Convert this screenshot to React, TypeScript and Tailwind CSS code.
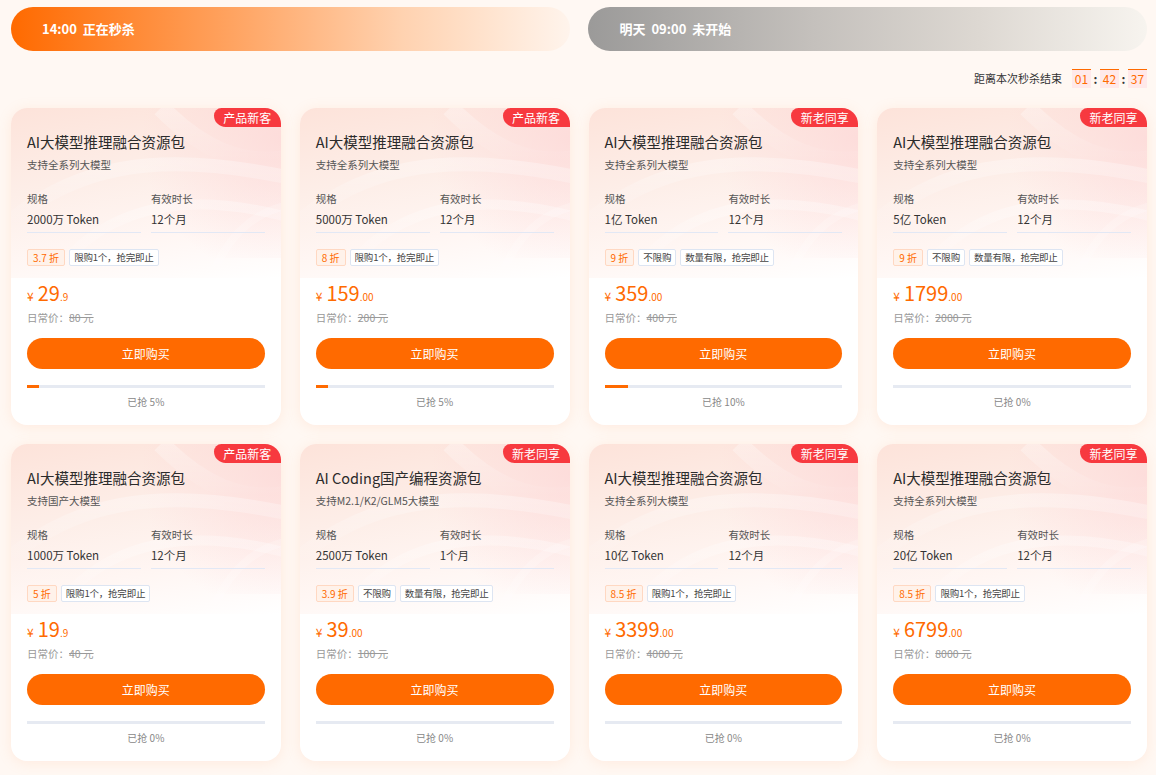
import React from "react";

type Deal = {
  badge: string;
  title: string;
  sub: string;
  spec: string;
  period: string;
  discount: string;
  tags: string[];
  price: string;
  cents: string;
  orig: string;
  pct: number;
};

const deals: Deal[] = [
  { badge: "产品新客", title: "AI大模型推理融合资源包", sub: "支持全系列大模型", spec: "2000万 Token", period: "12个月", discount: "3.7 折", tags: ["限购1个，抢完即止"], price: "29", cents: ".9", orig: "80 元", pct: 5 },
  { badge: "产品新客", title: "AI大模型推理融合资源包", sub: "支持全系列大模型", spec: "5000万 Token", period: "12个月", discount: "8 折", tags: ["限购1个，抢完即止"], price: "159", cents: ".00", orig: "200 元", pct: 5 },
  { badge: "新老同享", title: "AI大模型推理融合资源包", sub: "支持全系列大模型", spec: "1亿 Token", period: "12个月", discount: "9 折", tags: ["不限购", "数量有限，抢完即止"], price: "359", cents: ".00", orig: "400 元", pct: 10 },
  { badge: "新老同享", title: "AI大模型推理融合资源包", sub: "支持全系列大模型", spec: "5亿 Token", period: "12个月", discount: "9 折", tags: ["不限购", "数量有限，抢完即止"], price: "1799", cents: ".00", orig: "2000 元", pct: 0 },
  { badge: "产品新客", title: "AI大模型推理融合资源包", sub: "支持国产大模型", spec: "1000万 Token", period: "12个月", discount: "5 折", tags: ["限购1个，抢完即止"], price: "19", cents: ".9", orig: "40 元", pct: 0 },
  { badge: "新老同享", title: "AI Coding国产编程资源包", sub: "支持M2.1/K2/GLM5大模型", spec: "2500万 Token", period: "1个月", discount: "3.9 折", tags: ["不限购", "数量有限，抢完即止"], price: "39", cents: ".00", orig: "100 元", pct: 0 },
  { badge: "新老同享", title: "AI大模型推理融合资源包", sub: "支持全系列大模型", spec: "10亿 Token", period: "12个月", discount: "8.5 折", tags: ["限购1个，抢完即止"], price: "3399", cents: ".00", orig: "4000 元", pct: 0 },
  { badge: "新老同享", title: "AI大模型推理融合资源包", sub: "支持全系列大模型", spec: "20亿 Token", period: "12个月", discount: "8.5 折", tags: ["限购1个，抢完即止"], price: "6799", cents: ".00", orig: "8000 元", pct: 0 },
];

// soft light ribbons across the card header
function Swirl() {
  return (
    <svg
      className="pointer-events-none absolute left-0 top-0 h-[170px] w-full"
      viewBox="0 0 270 170"
      preserveAspectRatio="none"
    >
      <defs>
        <linearGradient id="swirlFade" x1="0" y1="0" x2="0" y2="1">
          <stop offset="0" stopColor="#ffffff" stopOpacity="0.3" />
          <stop offset="1" stopColor="#ffffff" stopOpacity="0" />
        </linearGradient>
      </defs>
      <path d="M-10 120 C 60 60, 140 40, 280 70" fill="none" stroke="url(#swirlFade)" strokeWidth="14" />
      <path d="M40 170 C 90 100, 170 80, 280 110" fill="none" stroke="url(#swirlFade)" strokeWidth="10" />
      <path d="M150 0 C 190 40, 230 60, 280 50" fill="none" stroke="url(#swirlFade)" strokeWidth="18" />
      <path d="M200 170 C 220 120, 250 100, 290 95" fill="none" stroke="#ffffff" strokeOpacity="0.2" strokeWidth="8" />
    </svg>
  );
}

function Card({ d }: { d: Deal }) {
  return (
    <div className="relative h-[317px] overflow-hidden rounded-[16px] bg-white shadow-[0_2px_14px_rgba(255,170,120,0.16)]">
      <div className="absolute inset-x-0 top-0 h-[170px] bg-[linear-gradient(170deg,#fde3da_0%,#fdeee8_40%,#fff6f3_70%,#ffffff_100%)]" />
      <div className="absolute right-0 top-0 h-[150px] w-[160px] bg-[radial-gradient(circle_at_100%_20%,rgba(253,214,214,0.7),rgba(255,255,255,0)_70%)]" />
      <Swirl />
      <div className="absolute right-0 top-0 flex h-[19px] w-[67px] items-center justify-center rounded-bl-[14px] rounded-tl-[9px] rounded-tr-[16px] bg-[#f7393f] text-[12px] leading-none text-white">
        {d.badge}
      </div>

      <div className="relative flex flex-col px-[16px] pt-[24px]">
        <div className="h-[20px] text-[14.5px] leading-[20px] text-[#2b2b2b]">{d.title}</div>
        <div className="mt-[6px] h-[14px] text-[10.5px] leading-[14px] text-[#555]">{d.sub}</div>

        <div className="mt-[20px] grid grid-cols-2 gap-[10px]">
          {[
            ["规格", d.spec],
            ["有效时长", d.period],
          ].map(([k, v]) => (
            <div key={k} className="border-b border-[#e2e8f5]">
              <div className="h-[14px] text-[10.5px] leading-[14px] text-[#555]">{k}</div>
              <div className="mt-[3px] h-[20px] text-[11.5px] leading-[20px] text-[#333]">{v}</div>
              <div className="h-[3px]" />
            </div>
          ))}
        </div>

        <div className="mt-[16px] flex h-[17px] gap-[4px]">
          <span className="flex items-center rounded-[2px] border border-[#ffd8c2] bg-[#fff2ea] px-[5px] text-[10px] leading-none text-[#ff6a00]">
            {d.discount}
          </span>
          {d.tags.map((t) => (
            <span
              key={t}
              className="flex items-center rounded-[2px] border border-[#dde5f2] bg-white px-[4px] text-[9.5px] leading-none tracking-[-0.2px] text-[#444]"
            >
              {t}
            </span>
          ))}
        </div>

        <div className="mt-[16px] flex h-[22px] items-baseline text-[#ff6a00]">
          <span className="mr-[4px] text-[12px]">¥</span>
          <span className="text-[20px] leading-[22px]">{d.price}</span>
          <span className="text-[10px]">{d.cents}</span>
        </div>

        <div className="mt-[7px] h-[14px] text-[10.5px] leading-[14px] text-[#999]">
          日常价：<span className="line-through">{d.orig}</span>
        </div>

        <button className="mt-[13px] h-[31px] w-full rounded-full bg-[#ff6a00] text-[12px] text-white">
          立即购买
        </button>

        <div className="mt-[16px] h-[3px] w-full bg-[#e6eaf2]">
          <div className="h-full bg-[#ff6a00]" style={{ width: `${d.pct}%` }} />
        </div>

        <div className="mt-[8px] h-[12px] text-center text-[10px] leading-[12px] text-[#888]">
          已抢 {d.pct}%
        </div>
      </div>
    </div>
  );
}

function TimeBox({ v }: { v: string }) {
  return (
    <span className="flex h-[19px] w-[19px] items-center justify-center border-t border-[#ff6a00] bg-[#ffe9ea] text-[12px] leading-none text-[#ff6a00]">
      {v}
    </span>
  );
}

export default function App() {
  return (
    <div
      className="min-h-[775px] w-[1156px] bg-[#fff8f3] pl-[11px] pr-[9px] pt-[7px]"
      style={{ fontFamily: '"Noto Sans CJK SC", "Noto Sans", sans-serif' }}
    >
      <div className="flex gap-[18px]">
        <div className="flex h-[44px] flex-1 items-center rounded-full bg-[linear-gradient(90deg,#ff6a00_0%,#ffa462_40%,#ffd2b0_70%,#fff4ec_100%)] pl-[31px] text-[13px] font-bold text-white">
          14:00&nbsp;&nbsp;正在秒杀
        </div>
        <div className="flex h-[44px] flex-1 items-center rounded-full bg-[linear-gradient(90deg,#9b9a99_0%,#c4c0bc_40%,#ddd8d2_70%,#f7f4ef_100%)] pl-[32px] text-[13px] font-bold text-white">
          明天&nbsp;&nbsp;09:00&nbsp;&nbsp;未开始
        </div>
      </div>

      <div className="mt-[18px] flex h-[19px] items-center justify-end">
        <span className="mr-[10px] text-[11px] text-[#333]">距离本次秒杀结束</span>
        <TimeBox v="01" />
        <span className="w-[9px] text-center text-[12px] font-bold text-[#333]">:</span>
        <TimeBox v="42" />
        <span className="w-[9px] text-center text-[12px] font-bold text-[#333]">:</span>
        <TimeBox v="37" />
      </div>

      <div className="mt-[20px] grid grid-cols-4 gap-x-[19px] gap-y-[19px]">
        {deals.map((d, i) => (
          <Card key={i} d={d} />
        ))}
      </div>
    </div>
  );
}
